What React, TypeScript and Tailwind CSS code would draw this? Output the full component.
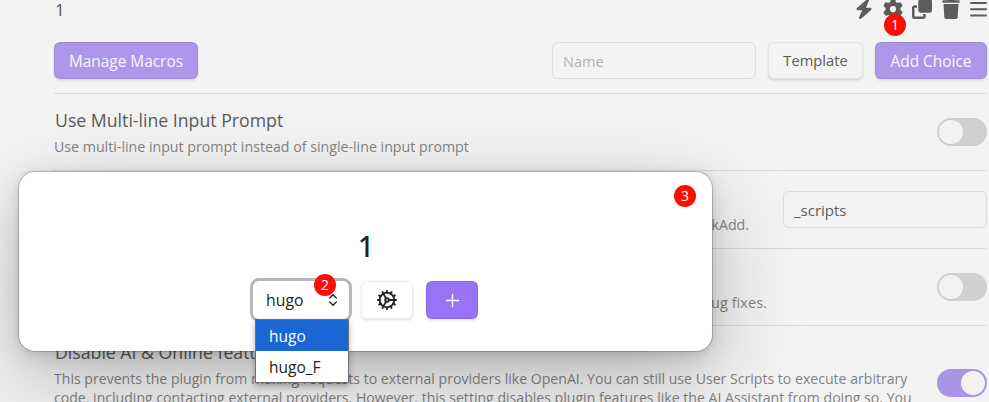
import React from "react";
import { Cog, Plus, ChevronsUpDown } from "lucide-react";
import { FaBolt, FaGear, FaClone, FaTrash } from "react-icons/fa6";

const controlShadow =
  "shadow-[inset_0_0_0_1px_rgba(0,0,0,0.07),0_2px_3px_rgba(0,0,0,0.07),0_1px_2px_rgba(0,0,0,0.05)]";

function Badge({ n, className }: { n: number; className: string }) {
  return (
    <span
      className={`absolute flex size-[22px] items-center justify-center rounded-full bg-[#fe0d05] text-[14px] leading-none text-white ${className}`}
    >
      {n}
    </span>
  );
}

function Toggle({ on = false }: { on?: boolean }) {
  return (
    <div
      className={`flex h-7 w-[50px] shrink-0 items-center rounded-full px-[2px] ${
        on ? "justify-end bg-[#a994e8]" : "justify-start bg-[#d0d0d0]"
      }`}
    >
      <div className="size-[24px] rounded-full bg-[#f2f2f2]" />
    </div>
  );
}

export default function App() {
  return (
    <div className="relative h-[402px] w-[989px] overflow-hidden bg-[#f3f3f3] font-['Open_Sans','Noto_Sans',sans-serif] text-[15px] text-[#5b5b5b]">
      <div className="ml-[54px] w-[933px]">
        <div className="flex h-[42px] items-start justify-between">
          <span className="pl-px font-['Noto_Sans',sans-serif] text-[17px] leading-[19px]">1</span>
          <div className="flex items-start gap-[9px] text-[20px] text-[#5c5c5c]">
            <FaBolt className="-mt-px" />
            <FaGear className="-mt-px" />
            <FaClone className="-mt-px" />
            <FaTrash className="-mt-px" />
            <svg className="h-[18px] w-[17px]" viewBox="0 0 17 18" stroke="currentColor" strokeWidth="2" strokeLinecap="round">
              <path d="M1 3h15M1 9.2h15M1 15.4h15" />
            </svg>
          </div>
        </div>

        <div className="flex h-[51px] items-start">
          <button className={`h-[37px] w-[144px] rounded-[6px] bg-[#ad97eb] pt-[2px] text-white/90 ${controlShadow}`}>
            <span className="text-[15.4px]">Manage Macros</span>
          </button>
          <div className="ml-auto flex">
            <div className="flex h-[37px] w-[204px] items-center rounded-[6px] border border-[#dedede] pl-[10px] pt-[2px] text-[14.6px] text-[#b4b4b4]">
              Name
            </div>
            <button className={`ml-3 h-[37px] w-[95px] rounded-[6px] bg-[#f4f4f4] text-[14.7px] ${controlShadow}`}>
              Template
            </button>
            <button className={`ml-3 h-[37px] w-[112px] rounded-[6px] bg-[#ad97eb] pt-[2px] text-[15.4px] text-white/90 ${controlShadow}`}>
              Add Choice
            </button>
          </div>
        </div>

        <div className="flex h-[77px] items-center justify-between border-t border-[#dcdcdc]">
          <div className="pt-px">
            <div className="pl-px text-[17.7px] leading-[26px]">Use Multi-line Input Prompt</div>
            <div className="pt-px text-[14.2px] leading-[25px] text-[#838383]">
              Use multi-line input prompt instead of single-line input prompt
            </div>
          </div>
          <Toggle />
        </div>

        <div className="flex h-[78px] items-center border-t border-[#dcdcdc]">
          <div className="mt-[30px] w-[695px] text-right text-[14.2px] text-[#838383]">QuickAdd.</div>
          <div className="ml-auto flex h-[37px] w-[204px] items-center rounded-[6px] border border-[#dedede] pl-[10px] pt-px">
            _scripts
          </div>
        </div>

        <div className="flex h-[77px] items-center border-t border-[#dcdcdc]">
          <div className="mt-[31px] w-[713px] text-right text-[14.4px] tracking-[0.1px] text-[#838383]">bug fixes.</div>
          <div className="ml-auto">
            <Toggle />
          </div>
        </div>

        <div className="flex justify-between border-t border-[#dcdcdc] pt-[13px]">
          <div className="whitespace-nowrap">
            <div className="pl-px text-[17.7px] leading-[26px]">Disable AI &amp; Online features</div>
            <div className="pt-[4px] text-[14.1px] leading-[19px] text-[#838383]">
              <div>
                This prevents the plugin from making requests to external providers like OpenAI. You can still use User Scripts to execute arbitrary
              </div>
              <div>
                code, including contacting external providers. However, this setting disables plugin features like the AI Assistant from doing so. You
              </div>
            </div>
          </div>
          <div className="mt-[30px]">
            <Toggle on />
          </div>
        </div>
      </div>

      <Badge n={1} className="left-[884px] top-[14px]" />

      <div className="absolute left-[19px] top-[172px] h-[179px] w-[693px] rounded-[16px] bg-white text-[#222] shadow-[0_0_0_1px_rgba(0,0,0,0.18),0_1.8px_7.3px_rgba(0,0,0,0.09),0_6.3px_24.7px_rgba(0,0,0,0.13),0_30px_90px_rgba(0,0,0,0.23)]">
        <h2 className="pl-px pt-[56px] text-center font-['Noto_Sans',sans-serif] text-[28px] font-medium leading-[36px]">1</h2>
        <div className="flex pl-[234px] pt-[17px]">
          <div className="relative flex h-[38px] w-[96px] items-center justify-between rounded-[6px] bg-white pl-[13px] pr-[8px] text-[15.8px] shadow-[0_0_0_3px_#b7b7b7]">
            <span className="pt-px">hugo</span>
            <ChevronsUpDown size={16} strokeWidth={2} />
            <div className="absolute left-[2px] top-[38px] z-10 w-[94px] border border-[#707070] bg-white text-[15.5px] shadow-[0_3px_6px_rgba(0,0,0,0.3)]">
              <div className="h-[31px] bg-[#1a66d2] pl-[13px] leading-[32px] text-white">hugo</div>
              <div className="h-[31px] pl-[13px] leading-[33px]">hugo_F</div>
            </div>
          </div>
          <button className={`ml-[12px] flex h-[38px] w-[52px] items-center justify-center rounded-[6px] ${controlShadow}`}>
            <Cog size={22} strokeWidth={2} />
          </button>
          <button className={`ml-[13px] flex h-[38px] w-[52px] items-center justify-center rounded-[6px] bg-[#9873f7] text-white ${controlShadow}`}>
            <Plus size={21} strokeWidth={1.5} />
          </button>
        </div>
        <Badge n={2} className="left-[295px] top-[102px]" />
        <Badge n={3} className="left-[655px] top-[13px]" />
      </div>
    </div>
  );
}
